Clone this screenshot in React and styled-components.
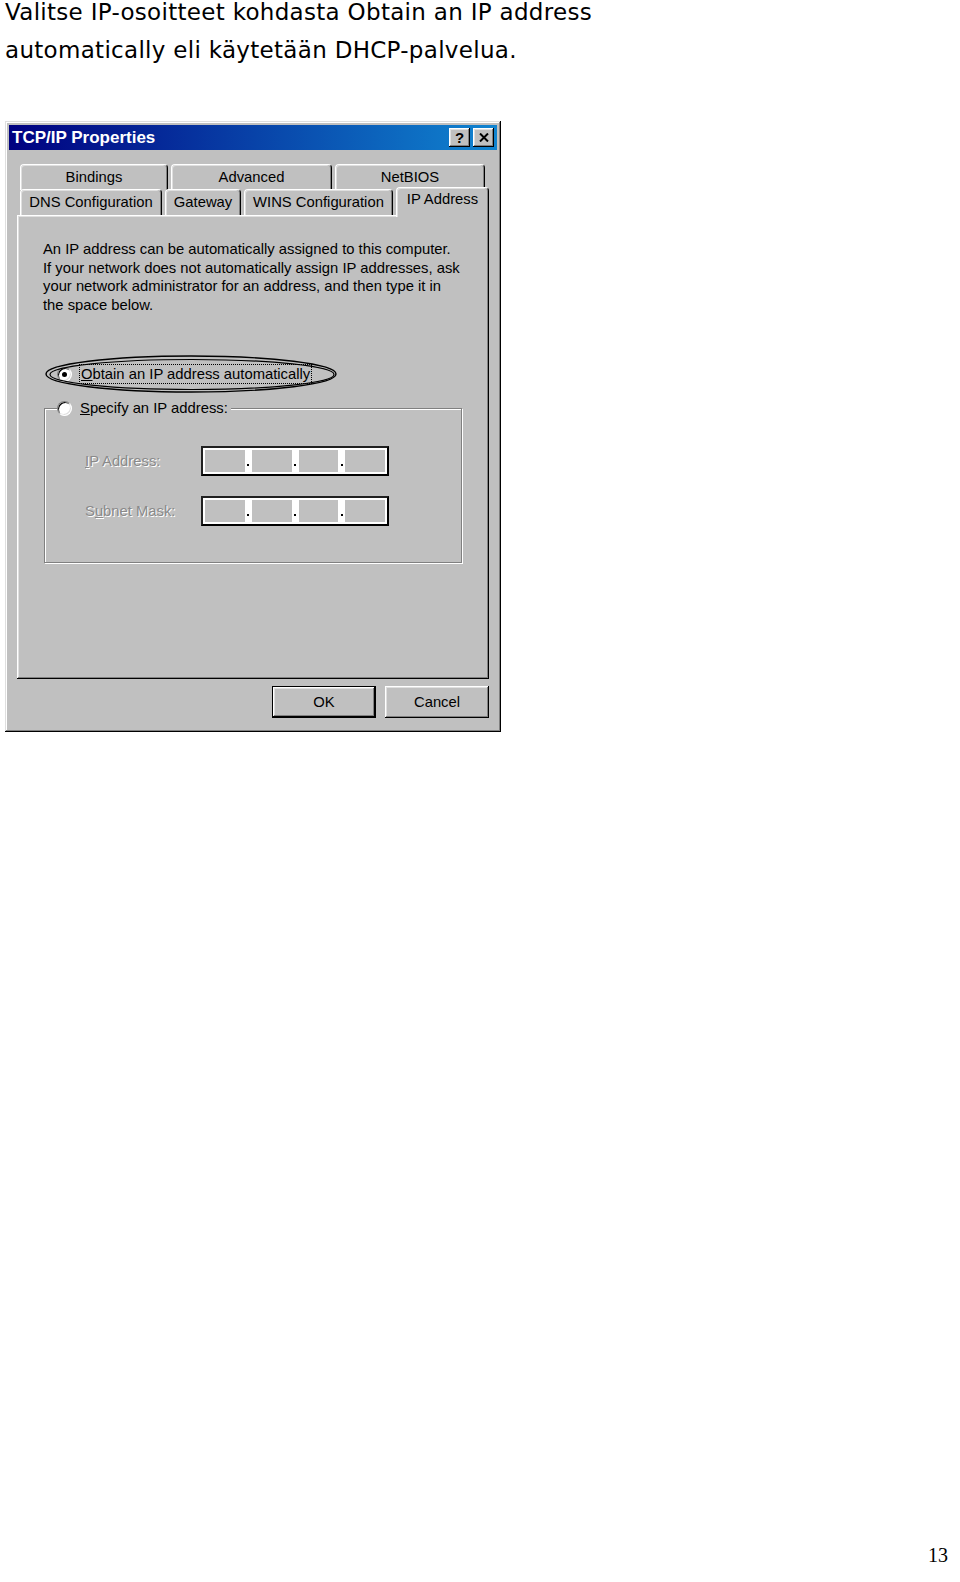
import styled, { createGlobalStyle } from 'styled-components'

const GlobalStyle = createGlobalStyle`
    body {
        margin: 0;
        background: #fff;
    }
`

const Page = styled.div`
    min-height: 1582px;
    box-sizing: border-box;
    display: flex;
    flex-direction: column;
    padding: 0 12px 15px 5px;
`

const Heading = styled.p`
    margin: -6px 0 0;
    font-family: "DejaVu Sans", sans-serif;
    font-size: 23px;
    letter-spacing: 0.3px;
    line-height: 37.5px;
    color: #000;
`

const Window = styled.div`
    margin-top: 52px;
    width: 496px;
    box-sizing: border-box;
    padding: 4px;
    background: #c0c0c0;
    box-shadow: inset -1px -1px #000, inset 1px 1px #dfdfdf,
        inset -2px -2px #808080, inset 2px 2px #fff;
    font-family: "Liberation Sans", Arial, sans-serif;
    font-size: 14.8px;
    color: #000;
`

const TitleBar = styled.div`
    height: 25px;
    display: flex;
    align-items: center;
    justify-content: space-between;
    padding: 0 3px;
    background: linear-gradient(90deg, #000080, #1084d0);
`

const Title = styled.span`
    color: #fff;
    font-weight: bold;
    font-size: 17px;
`

const TitleButtons = styled.div`
    display: flex;
    gap: 3px;
`

const TitleBtn = styled.div`
    width: 21px;
    height: 19px;
    box-sizing: border-box;
    display: flex;
    align-items: center;
    justify-content: center;
    background: #c0c0c0;
    box-shadow: inset -1px -1px #000, inset 1px 1px #fff,
        inset -2px -2px #808080, inset 2px 2px #dfdfdf;
    font-weight: bold;
    font-size: 15px;
    line-height: 1;
`

const Body = styled.div`
    padding: 15px 8px 10px 8px;
`

const TabStrip = styled.div`
    height: 50px;
    padding-left: 3px;
    display: flex;
    flex-direction: column;
`

const TabRow = styled.div`
    height: 25px;
    display: flex;
    align-items: flex-end;
    gap: 3px;
`

const Tab = styled.div`
    position: relative;
    z-index: ${(p) => (p.$active ? 2 : 1)};
    width: ${(p) => p.$w}px;
    height: ${(p) => (p.$active ? 30 : 26)}px;
    margin-bottom: ${(p) => (p.$active ? -2 : 0)}px;
    box-sizing: border-box;
    display: flex;
    justify-content: center;
    padding-top: ${(p) => (p.$active ? 3 : 4)}px;
    background: #c0c0c0;
    border-top: 1px solid #fff;
    border-left: 1px solid #fff;
    border-right: 1px solid #000;
    border-radius: 4px 4px 0 0;
    box-shadow: inset -1px 0 #808080, inset 1px 1px #dfdfdf;
`

const Panel = styled.div`
    height: 464px;
    box-sizing: border-box;
    padding: 25px 20px 0 26px;
    background: #c0c0c0;
    box-shadow: inset -1px -1px #000, inset 1px 1px #fff,
        inset -2px -2px #808080, inset 2px 2px #dfdfdf;
`

const Intro = styled.p`
    margin: 0;
    line-height: 18.5px;
    white-space: nowrap;
`

const RadioRow = styled.div`
    position: relative;
    height: 20px;
    display: flex;
    align-items: center;
    gap: 8px;
    padding-left: 14px;
    margin-top: 50px;
`

const Radio = styled.span`
    width: 15px;
    height: 15px;
    box-sizing: border-box;
    border-radius: 50%;
    border: 1px solid;
    border-color: #808080 #fff #fff #808080;
    box-shadow: inset 1px 1px #000, inset -1px -1px #dfdfdf;
    background: #fff;
    display: flex;
    align-items: center;
    justify-content: center;

    &::after {
        content: "";
        width: 5px;
        height: 5px;
        border-radius: 50%;
        background: ${(p) => (p.$checked ? '#000' : 'transparent')};
    }
`

const RadioLabel = styled.span`
    padding: 1px 1px;
    outline: ${(p) => (p.$focus ? '1px dotted #000' : 'none')};
`

const Ring = styled.svg`
    position: absolute;
    left: 2px;
    top: -9px;
    overflow: visible;
`

const GroupBox = styled.fieldset`
    margin: 14px 0 0 1px;
    width: 418px;
    box-sizing: border-box;
    padding: 0;
    border: 1px solid #808080;
    box-shadow: inset 1px 1px #fff, 1px 1px #fff;
`

const Legend = styled.legend`
    margin-left: 12px;
    padding: 0 3px 0 0;
    height: 20px;
    display: flex;
    align-items: center;
    gap: 8px;
    background: #c0c0c0;
`

const FieldGrid = styled.div`
    padding: 28px 0 36px 40px;
    display: grid;
    grid-template-columns: 116px 188px;
    row-gap: 20px;
    align-items: center;
`

const DisabledLabel = styled.span`
    color: #8a8a8a;
    text-shadow: 1px 1px #fff;
`

const IpField = styled.div`
    height: 30px;
    box-sizing: border-box;
    border: 2px solid #000;
    border-color: #202020 #000 #000 #202020;
    padding: 2px;
    background: #fff;
    display: flex;
`

const Octet = styled.div`
    flex: 1;
    background: #c0c0c0;
`

const Dot = styled.div`
    width: 7px;
    display: flex;
    align-items: flex-end;
    justify-content: center;
    padding-bottom: 6px;
    box-sizing: border-box;

    &::after {
        content: "";
        width: 2px;
        height: 2px;
        background: #000;
    }
`

const ButtonRow = styled.div`
    margin-top: 7px;
    display: flex;
    justify-content: flex-end;
    gap: 9px;
`

const Button = styled.div`
    width: 104px;
    height: 32px;
    box-sizing: border-box;
    display: flex;
    align-items: center;
    justify-content: center;
    background: #c0c0c0;
    border: ${(p) => (p.$default ? '1px solid #000' : 'none')};
    box-shadow: inset -1px -1px #000, inset 1px 1px #fff,
        inset -2px -2px #808080, inset 2px 2px #dfdfdf;
`

const PageNumber = styled.div`
    margin-top: auto;
    align-self: flex-end;
    font-family: "Liberation Serif", "Times New Roman", serif;
    font-size: 20px;
    line-height: 24px;
`

const row1 = [
    { label: 'Bindings', w: 148 },
    { label: 'Advanced', w: 161 },
    { label: 'NetBIOS', w: 150 },
]

const row2 = [
    { label: 'DNS Configuration', w: 142 },
    { label: 'Gateway', w: 76 },
    { label: 'WINS Configuration', w: 149 },
    { label: 'IP Address', w: 93, active: true },
]

const IpBox = () => (
    <IpField>
        <Octet />
        <Dot />
        <Octet />
        <Dot />
        <Octet />
        <Dot />
        <Octet />
    </IpField>
)

const App = () => {
    return (
        <Page>
            <GlobalStyle />
            <Heading>
                Valitse IP-osoitteet kohdasta Obtain an IP address
                <br />
                automatically eli käytetään DHCP-palvelua.
            </Heading>

            <Window>
                <TitleBar>
                    <Title>TCP/IP Properties</Title>
                    <TitleButtons>
                        <TitleBtn>?</TitleBtn>
                        <TitleBtn>
                            <svg width="10" height="9" viewBox="0 0 10 9">
                                <path d="M1 0.5 L9 8.5 M9 0.5 L1 8.5" stroke="#000" strokeWidth="2" />
                            </svg>
                        </TitleBtn>
                    </TitleButtons>
                </TitleBar>

                <Body>
                    <TabStrip>
                        <TabRow>
                            {row1.map((t) => (
                                <Tab key={t.label} $w={t.w}>{t.label}</Tab>
                            ))}
                        </TabRow>
                        <TabRow>
                            {row2.map((t) => (
                                <Tab key={t.label} $w={t.w} $active={t.active}>{t.label}</Tab>
                            ))}
                        </TabRow>
                    </TabStrip>

                    <Panel>
                        <Intro>
                            An IP address can be automatically assigned to this computer.
                            <br />
                            If your network does not automatically assign IP addresses, ask
                            <br />
                            your network administrator for an address, and then type it in
                            <br />
                            the space below.
                        </Intro>

                        <RadioRow>
                            <Radio $checked />
                            <RadioLabel $focus>
                                <u>O</u>btain an IP address automatically
                            </RadioLabel>
                            {/* hand drawn ring around the chosen option */}
                            <Ring width="292" height="38" viewBox="0 0 292 38">
                                <ellipse cx="146" cy="19" rx="145" ry="18" fill="none" stroke="#000" strokeWidth="1.4" />
                                <ellipse cx="147" cy="19.5" rx="142" ry="15" fill="none" stroke="#000" strokeWidth="1.2" />
                            </Ring>
                        </RadioRow>

                        <GroupBox>
                            <Legend>
                                <Radio />
                                <span><u>S</u>pecify an IP address:</span>
                            </Legend>
                            <FieldGrid>
                                <DisabledLabel><u>I</u>P Address:</DisabledLabel>
                                <IpBox />
                                <DisabledLabel>S<u>u</u>bnet Mask:</DisabledLabel>
                                <IpBox />
                            </FieldGrid>
                        </GroupBox>
                    </Panel>

                    <ButtonRow>
                        <Button $default>OK</Button>
                        <Button>Cancel</Button>
                    </ButtonRow>
                </Body>
            </Window>

            <PageNumber>13</PageNumber>
        </Page>
    )
}

export default App
